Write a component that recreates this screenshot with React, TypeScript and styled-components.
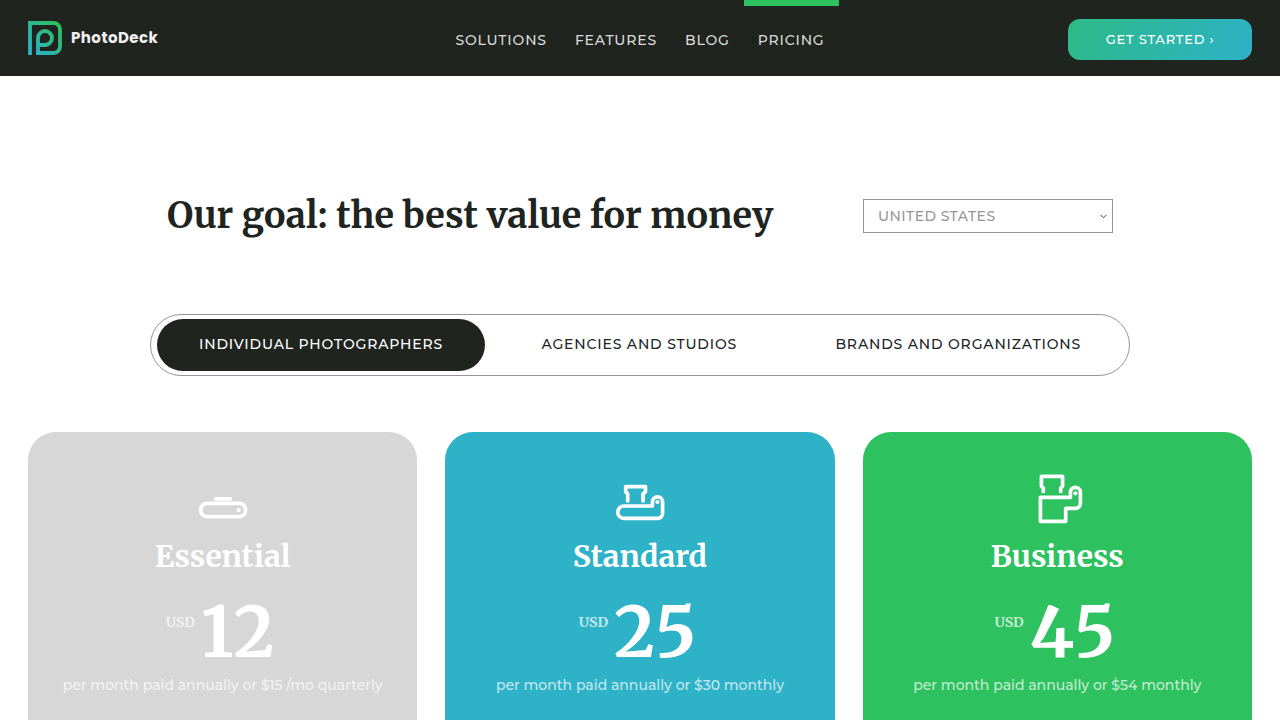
import React from "react";
import styled, { createGlobalStyle } from "styled-components";

const ink = "#20241f";
const green = "#2dc15f";
const blue = "#2db2c7";
const sans = `Montserrat, Inter, "Open Sans", sans-serif`;
const serif = `Merriweather, "Liberation Serif", serif`;

const GlobalStyle = createGlobalStyle`
  *, *::before, *::after { box-sizing: border-box; }
  body { margin: 0; background: #fff; color: ${ink}; font-family: ${sans}; }
`;

const Page = styled.div`
  min-height: 100vh;
  display: flex;
  flex-direction: column;
`;

const Header = styled.header`
  height: 76px;
  padding: 0 28px;
  display: grid;
  grid-template-columns: 1fr auto 1fr;
  align-items: center;
  background: ${ink};
`;

const Brand = styled.a`
  display: flex;
  align-items: center;
  gap: 9px;
  color: #f0f0f0;
  font: 700 15px/34px Poppins, Inter, sans-serif;
  letter-spacing: 0.03em;
  text-decoration: none;
`;

const Nav = styled.nav`
  align-self: stretch;
  display: flex;
`;

const NavLink = styled.a<{ $active?: boolean }>`
  display: flex;
  align-items: center;
  padding: 0 14px 2px;
  border-top: 6px solid ${(p) => (p.$active ? green : "transparent")};
  color: #d9dad9;
  font-size: 14px;
  font-weight: 500;
  letter-spacing: 0.06em;
  text-decoration: none;
`;

const StartButton = styled.button`
  justify-self: end;
  width: 184px;
  height: 41px;
  margin-top: 2px;
  border: 0;
  border-radius: 12px;
  background: linear-gradient(120deg, #2dba87, ${blue});
  color: #fff;
  font: 500 13px/20px ${sans};
  letter-spacing: 0.06em;
  cursor: pointer;
`;

const Main = styled.main`
  flex: 1;
  display: flex;
  flex-direction: column;
  padding: 112px 28px 0;
`;

const Intro = styled.section`
  width: 100%;
  max-width: 980px;
  margin: 0 auto;
  padding: 0 17px;
  display: flex;
  align-items: center;
  justify-content: space-between;
  gap: 28px;
`;

const Title = styled.h1`
  margin: 0;
  font: 700 36px/56px ${serif};
`;

const SelectWrap = styled.label`
  position: relative;
  width: 250px;
  flex: none;
`;

const Country = styled.select`
  display: block;
  appearance: none;
  width: 100%;
  height: 34px;
  padding: 0 28px 0 14px;
  border: 1px solid #979797;
  border-radius: 0;
  background: #fff;
  color: #979797;
  font: 500 14px/20px ${sans};
  letter-spacing: 0.03em;
`;

const Chevron = styled.svg`
  position: absolute;
  right: 6px;
  top: 15px;
  pointer-events: none;
`;

const Tabs = styled.div`
  width: 100%;
  max-width: 980px;
  height: 62px;
  margin: 70px auto 56px;
  padding: 0 6px;
  display: flex;
  align-items: center;
  justify-content: space-between;
  border: 1px solid #979797;
  border-radius: 31px;
`;

const Tab = styled.button<{ $active?: boolean }>`
  height: 52px;
  padding: 0 42px 2px;
  border: 0;
  border-radius: 26px;
  background: ${(p) => (p.$active ? ink : "transparent")};
  color: ${(p) => (p.$active ? "#fff" : ink)};
  font: 500 14px/20px ${sans};
  letter-spacing: 0.06em;
  cursor: pointer;
`;

const Plans = styled.section`
  flex: 1;
  display: grid;
  grid-template-columns: repeat(3, 1fr);
  gap: 28px;
`;

const Card = styled.article<{ $color: string }>`
  padding: 42px 20px 20px;
  display: flex;
  flex-direction: column;
  align-items: center;
  border-radius: 28px 28px 0 0;
  background: ${(p) => p.$color};
  color: #fff;
`;

const PlanName = styled.h2`
  margin: 12px 0 0;
  font: 700 30px/40px ${serif};
`;

const Price = styled.div`
  margin-top: 14px;
  padding-right: 5px;
  display: flex;
  gap: 6px;
  font-family: ${serif};
`;

const Currency = styled.span`
  margin-top: 22px;
  font-size: 14px;
  font-weight: 700;
  line-height: 20px;
  opacity: 0.7;
`;

const Amount = styled.span`
  font-size: 70px;
  font-weight: 700;
  font-kerning: none;
  line-height: 84px;
`;

const Terms = styled.p`
  margin: 1px 0 0;
  font-size: 14px;
  font-weight: 500;
  line-height: 20px;
  opacity: 0.7;
`;

const PlanIcon = styled.svg`
  width: 50px;
  height: 50px;
  overflow: visible;
  fill: none;
  stroke: #fff;
  stroke-width: 3.7;
  stroke-linecap: round;
  stroke-linejoin: round;
  circle { fill: #fff; stroke: none; }
`;

const Logo = () => (
  <svg width="34" height="34" viewBox="0 0 34 34" fill="none" aria-hidden="true">
    <defs>
      <linearGradient id="logo" x1="0" y1="34" x2="34" y2="0" gradientUnits="userSpaceOnUse">
        <stop offset="0.1" stopColor={blue} />
        <stop offset="0.9" stopColor={green} />
      </linearGradient>
    </defs>
    <path
      d="M2 34V2H25.5a6.5 6.5 0 0 1 6.5 6.5V25.5a6.5 6.5 0 0 1-6.5 6.5H10V17a7 7 0 1 1 7 7H11"
      stroke="url(#logo)"
      strokeWidth="3.8"
    />
  </svg>
);

const plans = [
  {
    name: "Essential", color: "#d7d7d7", price: "12",
    terms: "per month paid annually or $15 /mo quarterly",
    icon: (
      <>
        <path d="M17.8 24.9H32.2" />
        <rect x="2.8" y="29.3" width="44.8" height="13.3" rx="6.2" />
        <circle cx="40.7" cy="36" r="2.1" />
      </>
    ),
  },
  {
    name: "Standard", color: blue, price: "25",
    terms: "per month paid annually or $30 monthly",
    icon: (
      <>
        <path d="M12.7 27V20L10.7 17.8V12.7H30.5V17.8L28 20V27" />
        <path d="M8.9 32H37.4V28a5.1 5.1 0 0 1 10.2 0V39.3a5 5 0 0 1-5 5H8.9a6.1 6.1 0 0 1 0-12.3z" />
        <circle cx="42.4" cy="28" r="2.1" />
      </>
    ),
  },
  {
    name: "Business", color: green, price: "45",
    terms: "per month paid annually or $54 monthly",
    icon: (
      <>
        <path d="M11.3 17.5V14L9.4 12V2.4H30.6V12L28.7 14V17.5" />
        <path d="M8.4 23.3H38.4V18.4a5 5 0 0 1 10 0V29.3a5 5 0 0 1-5 5H33.7V47.3H8.4z" />
        <circle cx="43.4" cy="19.3" r="2.1" />
      </>
    ),
  },
];

export default function App() {
  return (
    <Page>
      <GlobalStyle />
      <Header>
        <Brand href="#"><Logo />PhotoDeck</Brand>
        <Nav>
          <NavLink href="#">SOLUTIONS</NavLink>
          <NavLink href="#">FEATURES</NavLink>
          <NavLink href="#">BLOG</NavLink>
          <NavLink href="#" $active>PRICING</NavLink>
        </Nav>
        <StartButton>GET STARTED ›</StartButton>
      </Header>
      <Main>
        <Intro>
          <Title>Our goal: the best value for money</Title>
          <SelectWrap>
            <Country aria-label="Country"><option>UNITED STATES</option></Country>
            <Chevron width="7" height="5" viewBox="0 0 7 5" fill="none" aria-hidden="true">
              <path d="M0.5 0.8 3.5 3.8 6.5 0.8" stroke="#444" />
            </Chevron>
          </SelectWrap>
        </Intro>
        <Tabs role="tablist">
          <Tab role="tab" aria-selected $active>INDIVIDUAL PHOTOGRAPHERS</Tab>
          <Tab role="tab">AGENCIES AND STUDIOS</Tab>
          <Tab role="tab">BRANDS AND ORGANIZATIONS</Tab>
        </Tabs>
        <Plans>
          {plans.map((p) => (
            <Card key={p.name} $color={p.color}>
              <PlanIcon viewBox="0 0 50 50" aria-hidden="true">{p.icon}</PlanIcon>
              <PlanName>{p.name}</PlanName>
              <Price><Currency>USD</Currency><Amount>{p.price}</Amount></Price>
              <Terms>{p.terms}</Terms>
            </Card>
          ))}
        </Plans>
      </Main>
    </Page>
  );
}
